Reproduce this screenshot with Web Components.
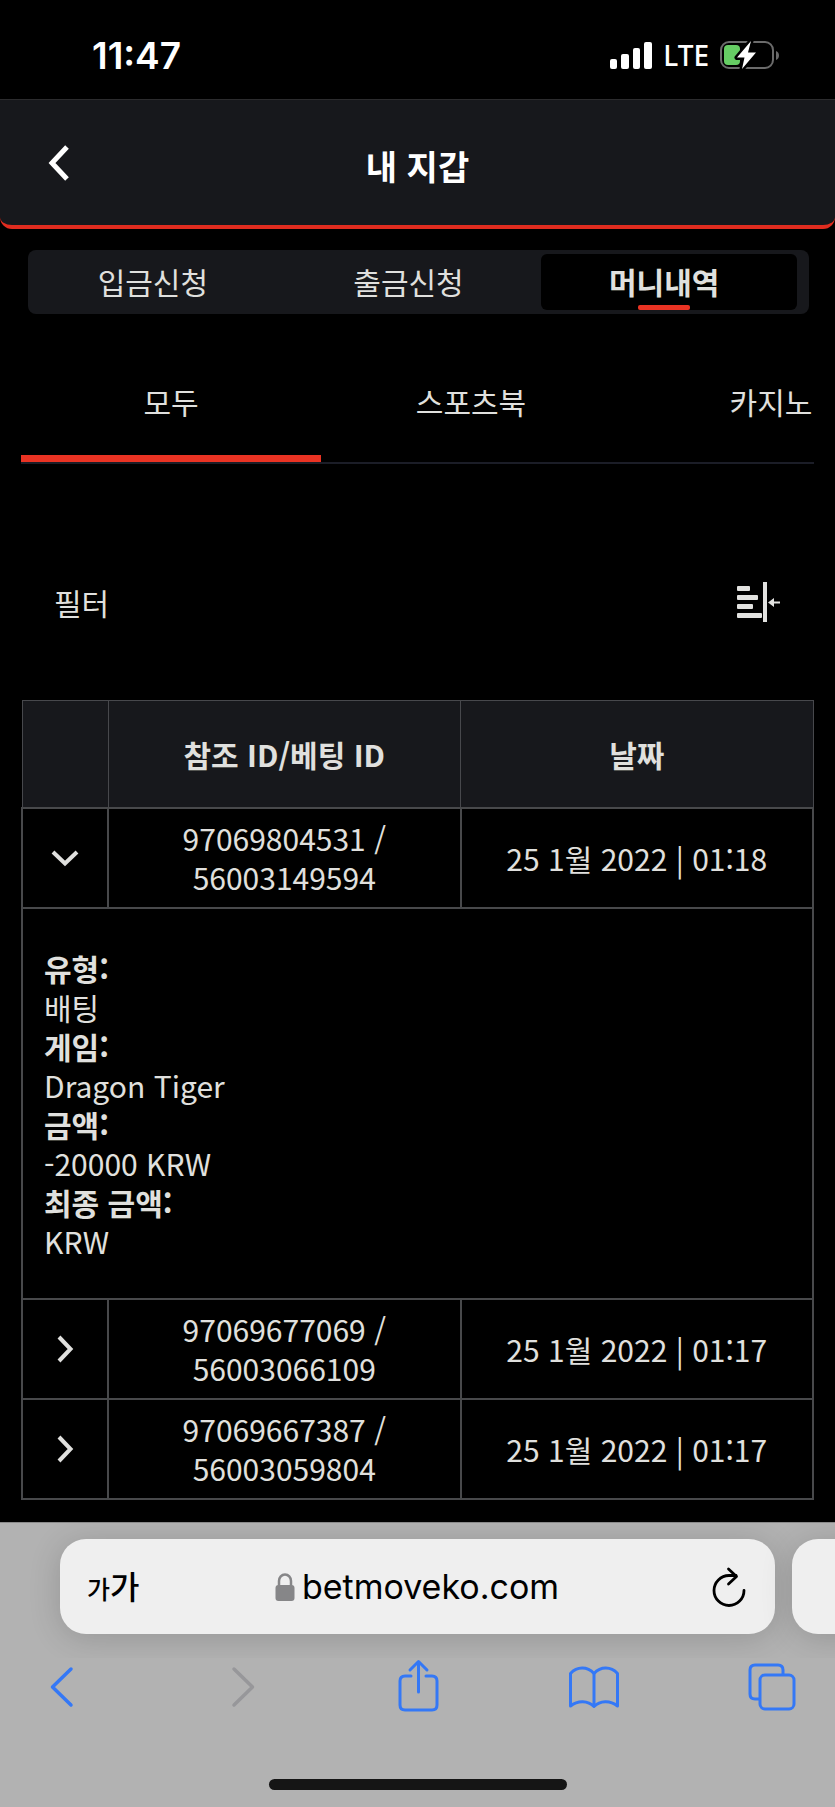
<!DOCTYPE html>
<html lang="ko">
<head>
<meta charset="utf-8">
<meta name="viewport" content="width=device-width, initial-scale=1">
<title>내 지갑</title>
<style>
  body {
    margin: 0;
    min-height: 100vh;
    display: flex;
    flex-direction: column;
    background: #000;
    color: #e0e0de;
    font-family: "Noto Sans CJK KR", sans-serif;
    font-size: 30px;
    line-height: 39px;
    --panel: #17181c;
    --accent: #ea3323;
    --line: #48494b;
  }

  browser-bar {
    margin-top: auto;
  }
</style>
</head>
<body>
<status-bar time="11:47" network="LTE"></status-bar>
<page-header>내 지갑</page-header>
<main>
  <wallet-tabs>
    <wallet-tab>입금신청</wallet-tab>
    <wallet-tab>출금신청</wallet-tab>
    <wallet-tab active>머니내역</wallet-tab>
  </wallet-tabs>
  <category-tabs>
    <category-tab active>모두</category-tab>
    <category-tab>스포츠북</category-tab>
    <category-tab>카지노</category-tab>
  </category-tabs>
  <filter-row>필터</filter-row>
  <bet-history></bet-history>
</main>
<browser-bar>betmoveko.com</browser-bar>

<script>
/**
 * Base class, attaches a shadow root with the markup of the subclass.
 */
class BaseElement extends HTMLElement {
  constructor () {
    super()
    this.attachShadow({ mode: 'open' })
    const template = document.createElement('template')
    template.innerHTML = this.constructor.markup
    this.shadowRoot.appendChild(template.content.cloneNode(true))
  }
}

const icons = {
  signal: ['0 0 42 27', `
    <g fill="#fff">
      <rect x="0" y="17" width="7" height="10" rx="2"/>
      <rect x="11" y="12" width="8" height="15" rx="2"/>
      <rect x="23" y="6" width="7" height="21" rx="2"/>
      <rect x="34" y="0" width="8" height="27" rx="2"/>
    </g>`],
  battery: ['0 0 60 30', `
    <rect x="1" y="2" width="52" height="26" rx="8" fill="none" stroke="#6b6b6b" stroke-width="2"/>
    <path d="M56 11c4 1.500 4 7.500 0 9z" fill="#6b6b6b"/>
    <rect x="4" y="5" width="16" height="20" rx="4" fill="#66cd64"/>
    <path d="M31 1 17 17.500h7.500L22 29l14-16.500h-8z" fill="#fff" stroke="#000" stroke-width="5" stroke-linejoin="round"/>
    <path d="M31 1 17 17.500h7.500L22 29l14-16.500h-8z" fill="#fff"/>`],
  back: ['0 0 24 36', '<path d="M19 2 4 18l15 16" fill="none" stroke="#fff" stroke-width="5"/>'],
  filter: ['0 0 44 40', `
    <g fill="#e2e2e0">
      <rect x="0" y="4" width="13" height="5" rx="1"/>
      <rect x="0" y="13" width="21" height="5" rx="1"/>
      <rect x="0" y="22" width="16" height="5" rx="1"/>
      <rect x="0" y="31" width="25" height="5" rx="1"/>
      <rect x="26" y="0" width="4" height="40"/>
      <path d="M31 20.500 37 16v3.500h6v2h-6V25z"/>
    </g>`],
  down: ['0 0 28 28', '<path d="m2 8 12 11.500L26 8" fill="none" stroke="#e0e0de" stroke-width="4"/>'],
  right: ['0 0 28 28', '<path d="m8 2 11.500 12L8 26" fill="none" stroke="#e0e0de" stroke-width="4"/>'],
  lock: ['0 0 20 28', `
    <path d="M4 13V8a6 6.500 0 0 1 12 0v5" fill="none" stroke="#868688" stroke-width="2.500"/>
    <rect x="0.500" y="12" width="19" height="16" rx="3" fill="#868688"/>`],
  reload: ['0 0 36 42', `
    <g fill="none" stroke="#000" stroke-width="2.800" stroke-linecap="round" stroke-linejoin="round">
      <path d="M33 24.500A15 15 0 1 1 18 9.500h7"/>
      <path d="m17.500 3 8 7.500-8 7.500"/>
    </g>`],
  prev: ['0 0 56 56', '<path d="M37 11 18.500 29 37 47" fill="none" stroke="#3478f6" stroke-width="3.500" stroke-linecap="round" stroke-linejoin="round"/>'],
  next: ['0 0 56 56', '<path d="m23 11 18.500 18L23 47" fill="none" stroke="#97979a" stroke-width="3.500" stroke-linecap="round" stroke-linejoin="round"/>'],
  share: ['0 0 56 56', `
    <g fill="none" stroke="#3478f6" stroke-width="3" stroke-linecap="round" stroke-linejoin="round">
      <path d="M22 18h-6q-5 0-5 5v24q0 5 5 5h27q5 0 5-5V23q0-5-5-5h-6"/>
      <path d="M29.500 34V4M21 12l8.500-8.500L38 12"/>
    </g>`],
  book: ['0 0 56 56', `
    <g fill="none" stroke="#3478f6" stroke-width="3" stroke-linejoin="round">
      <path d="M28 15.500C21 8 11 8.500 4.500 15.500V48C12 42 22 42.500 28 48.500 34 42.500 44 42 51.500 48V15.500C45 8.500 35 8 28 15.500z"/>
      <path d="M28 15.500v33"/>
    </g>`],
  pages: ['0 0 56 56', `
    <g fill="none" stroke="#3478f6" stroke-width="3">
      <rect x="17" y="17" width="34" height="34" rx="5"/>
      <path d="M17 41h-5q-5 0-5-5V12q0-5 5-5h23q5 0 5 5v5"/>
    </g>`]
}

customElements.define('app-icon',
  /**
   * Draws one of the icons above in its natural size.
   */
  class extends BaseElement {
    static markup = `
      <style>
        :host { display: block; flex: none; }
        svg { display: block; }
      </style>
      <div></div>`

    connectedCallback () {
      const [box, shapes] = icons[this.getAttribute('name')]
      const [, , width, height] = box.split(' ')
      this.shadowRoot.querySelector('div').innerHTML =
        `<svg width="${width}" height="${height}" viewBox="${box}" aria-hidden="true">${shapes}</svg>`
    }
  })

customElements.define('status-bar',
  class extends BaseElement {
    static markup = `
      <style>
        :host {
          display: flex;
          justify-content: space-between;
          align-items: center;
          height: 100px;
          padding: 11px 55px 0 92px;
          box-sizing: border-box;
          border-bottom: 1px solid #2c2c2e;
          color: #fff;
          font-family: Inter, sans-serif;
        }
        .time { font-size: 37px; font-weight: 600; }
        .right { display: flex; align-items: center; gap: 11px; }
        .network { font-family: "Noto Sans", sans-serif; font-size: 28px; font-weight: 500; }
      </style>
      <span class="time"></span>
      <div class="right">
        <app-icon name="signal"></app-icon>
        <span class="network"></span>
        <app-icon name="battery"></app-icon>
      </div>`

    connectedCallback () {
      this.shadowRoot.querySelector('.time').textContent = this.getAttribute('time')
      this.shadowRoot.querySelector('.network').textContent = this.getAttribute('network')
    }
  })

customElements.define('page-header',
  class extends BaseElement {
    static markup = `
      <style>
        :host { display: block; background: #000; }
        header {
          display: grid;
          grid-template-columns: 1fr auto 1fr;
          align-items: center;
          height: 125px;
          padding: 0 48px;
          background: var(--panel);
          border-bottom: 4px solid #e02c1f;
          border-radius: 0 0 12px 12px;
        }
        button { justify-self: start; padding: 0; border: 0; background: none; }
        h1 { margin: 0; padding-top: 6px; color: #fff; font-size: 34px; font-weight: 700; }
      </style>
      <header>
        <button aria-label="뒤로"><app-icon name="back"></app-icon></button>
        <h1><slot></slot></h1>
      </header>`
  })

customElements.define('wallet-tabs',
  class extends BaseElement {
    static markup = `
      <style>
        :host {
          display: flex;
          margin: 21px 26px 0 28px;
          padding: 4px 12px 4px 2px;
          background: var(--panel);
          border-radius: 8px;
        }
      </style>
      <slot></slot>`
  })

customElements.define('wallet-tab',
  class extends BaseElement {
    static markup = `
      <style>
        :host { display: block; flex: 1; }
        button {
          display: flex;
          flex-direction: column;
          align-items: center;
          width: 100%;
          height: 56px;
          padding: 8px 10px 0 0;
          border: 0;
          border-radius: 6px;
          background: none;
          color: inherit;
          font: inherit;
        }
        :host([active]) button { background: #000; font-weight: 700; }
        :host([active]) button::after {
          content: '';
          width: 52px;
          height: 5px;
          margin-top: auto;
          border-radius: 2px;
          background: var(--accent);
        }
      </style>
      <button><slot></slot></button>`
  })

customElements.define('category-tabs',
  class extends BaseElement {
    static markup = `
      <style>
        :host {
          display: flex;
          margin: 26px 21px 0;
          overflow: hidden;
          border-bottom: 2px solid #1b1d27;
        }
      </style>
      <slot></slot>`
  })

customElements.define('category-tab',
  class extends BaseElement {
    static markup = `
      <style>
        :host { display: block; flex: none; width: 300px; }
        button {
          display: block;
          width: 100%;
          height: 122px;
          padding: 7px 0 0;
          border: 0;
          border-bottom: 7px solid transparent;
          background: none;
          color: inherit;
          font: inherit;
        }
        :host([active]) button { border-color: var(--accent); }
      </style>
      <button><slot></slot></button>`
  })

customElements.define('filter-row',
  class extends BaseElement {
    static markup = `
      <style>
        :host {
          display: flex;
          justify-content: space-between;
          align-items: center;
          height: 40px;
          padding: 118px 54px 78px;
        }
        button { padding: 0; border: 0; background: none; }
      </style>
      <slot></slot>
      <button aria-label="필터 열기"><app-icon name="filter"></app-icon></button>`
  })

const bets = [
  {
    reference: '97069804531',
    bet: '56003149594',
    date: '25 1월 2022 | 01:18',
    details: [
      ['유형:', '배팅'],
      ['게임:', 'Dragon Tiger'],
      ['금액:', '-20000 KRW'],
      ['최종 금액:', 'KRW']
    ]
  },
  { reference: '97069677069', bet: '56003066109', date: '25 1월 2022 | 01:17' },
  { reference: '97069667387', bet: '56003059804', date: '25 1월 2022 | 01:17' }
]

customElements.define('bet-history',
  /**
   * Table of bets, an open bet has its details in a row below.
   */
  class extends BaseElement {
    static markup = `
      <style>
        :host { display: block; padding: 0 21px 22px; }
        table {
          width: 100%;
          table-layout: fixed;
          border-collapse: collapse;
          font: inherit;
        }
        col.toggle { width: 86px; }
        th {
          height: 106px;
          padding: 0;
          border: 1px solid #47484c;
          background: var(--panel);
        }
        td {
          height: 78px;
          padding: 10px;
          border: 2px solid var(--line);
          text-align: center;
        }
        td.details { padding: 40px 21px 37px; text-align: left; }
        button { display: block; margin: 0 auto; padding: 0; border: 0; background: none; }
        dl, dd { margin: 0; }
        dt { font-weight: 700; }
      </style>
      <table>
        <colgroup><col class="toggle"><col><col></colgroup>
        <thead>
          <tr><th></th><th>참조 ID/베팅 ID</th><th>날짜</th></tr>
        </thead>
        <tbody></tbody>
      </table>`

    connectedCallback () {
      this.shadowRoot.querySelector('tbody').innerHTML = bets.map(bet => `
        <tr>
          <td><button aria-label="상세"><app-icon name="${bet.details ? 'down' : 'right'}"></app-icon></button></td>
          <td>${bet.reference} /<br>${bet.bet}</td>
          <td>${bet.date}</td>
        </tr>
        ${bet.details ? this.renderDetails(bet.details) : ''}`).join('')
    }

    renderDetails (details) {
      const items = details.map(([name, value]) => `<dt>${name}</dt><dd>${value}</dd>`).join('')
      return `<tr><td class="details" colspan="3"><dl>${items}</dl></td></tr>`
    }
  })

customElements.define('browser-bar',
  class extends BaseElement {
    static markup = `
      <style>
        :host {
          display: block;
          background: #b2b2b2;
          color: #000;
          border-top: 1px solid #8a8a8a;
        }
        button { padding: 0; border: 0; background: none; color: inherit; font: inherit; }
        .pages {
          display: flex;
          gap: 17px;
          padding: 16px 60px 24px;
          overflow: hidden;
        }
        .page {
          flex: none;
          width: 100%;
          height: 95px;
          box-sizing: border-box;
          display: grid;
          grid-template-columns: 1fr auto 1fr;
          align-items: center;
          padding: 0 28px 0 27px;
          background: #efefef;
          border-radius: 26px;
          box-shadow: 0 4px 32px rgba(0, 0, 0, 0.16);
        }
        .size { justify-self: start; font-size: 32px; font-weight: 500; }
        .size small { font-size: 25px; }
        .address {
          display: flex;
          align-items: center;
          gap: 7px;
          font-family: Inter, sans-serif;
          font-size: 34px;
        }
        .reload { justify-self: end; }
        nav {
          display: flex;
          justify-content: space-between;
          padding: 0 36px 0 34px;
        }
        .home {
          width: 298px;
          height: 11px;
          margin: 65px auto 17px;
          border-radius: 6px;
          background: #151515;
        }
      </style>
      <div class="pages">
        <div class="page">
          <button class="size"><small>가</small>가</button>
          <button class="address"><app-icon name="lock"></app-icon><slot></slot></button>
          <button class="reload" aria-label="새로고침"><app-icon name="reload"></app-icon></button>
        </div>
        <div class="page"></div>
      </div>
      <nav>
        <button aria-label="이전"><app-icon name="prev"></app-icon></button>
        <button aria-label="다음"><app-icon name="next"></app-icon></button>
        <button aria-label="공유"><app-icon name="share"></app-icon></button>
        <button aria-label="책갈피"><app-icon name="book"></app-icon></button>
        <button aria-label="탭"><app-icon name="pages"></app-icon></button>
      </nav>
      <div class="home"></div>`
  })
</script>
</body>
</html>
